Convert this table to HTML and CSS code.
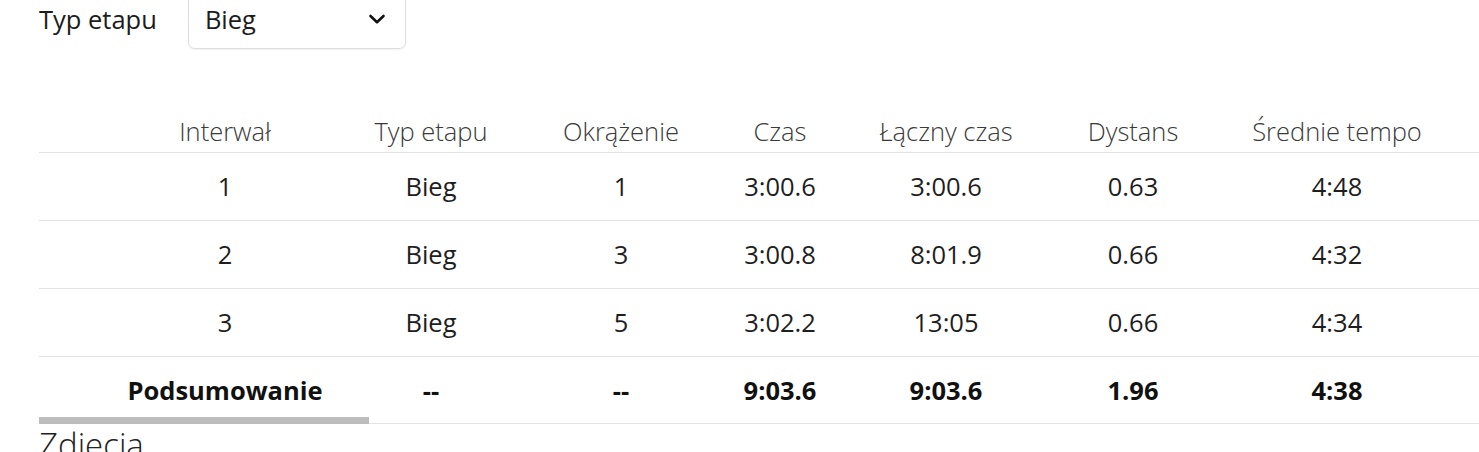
FILE: index.html
```html
<!DOCTYPE html>
<html lang="pl">
<head>
<meta charset="utf-8">
<title>Interwały</title>
<link rel="stylesheet" href="styles.css">
</head>
<body>
<main class="page">
  <div class="filter">
    <span class="filter-label">Typ etapu</span>
    <div class="select">
      <span class="select-value">Bieg</span>
      <svg class="chevron" width="18" height="12" viewBox="0 0 18 12" aria-hidden="true"><path d="M2.5 3 L9 9.2 L15.5 3" fill="none" stroke="#111" stroke-width="2.6" stroke-linecap="round" stroke-linejoin="round"/></svg>
    </div>
  </div>

  <div class="table-scroll">
    <table class="laps">
      <colgroup>
        <col class="c1"><col class="c2"><col class="c3"><col class="c4"><col class="c5"><col class="c6"><col class="c7"><col class="c8">
      </colgroup>
      <thead>
        <tr>
          <th>Interwał</th><th>Typ etapu</th><th>Okrążenie</th><th>Czas</th><th>Łączny czas</th><th>Dystans</th><th>Średnie tempo</th><th></th>
        </tr>
      </thead>
      <tbody>
        <tr><td>1</td><td>Bieg</td><td>1</td><td>3:00.6</td><td>3:00.6</td><td>0.63</td><td>4:48</td><td></td></tr>
        <tr><td>2</td><td>Bieg</td><td>3</td><td>3:00.8</td><td>8:01.9</td><td>0.66</td><td>4:32</td><td></td></tr>
        <tr><td>3</td><td>Bieg</td><td>5</td><td>3:02.2</td><td>13:05</td><td>0.66</td><td>4:34</td><td></td></tr>
        <tr class="summary"><td>Podsumowanie</td><td>--</td><td>--</td><td>9:03.6</td><td>9:03.6</td><td>1.96</td><td>4:38</td><td></td></tr>
      </tbody>
    </table>
    <div class="scroll-thumb"></div>
  </div>

  <h2 class="section-title">Zdjęcia</h2>
</main>
</body>
</html>
```

FILE: styles.css
```css
html, body {
  margin: 0;
  padding: 0;
  background: #fff;
}

body {
  font-family: "Open Sans", "Noto Sans", sans-serif;
  color: #222;
  overflow: hidden;
}

.page {
  padding-left: 39px;
}

.filter {
  display: flex;
  align-items: center;
  gap: 31px;
  margin-top: -11px;
  height: 60px;
}

.filter-label {
  font-size: 25.5px;
  color: #1c1c1c;
}

.select {
  box-sizing: border-box;
  width: 218px;
  height: 60px;
  border: 1px solid #dedede;
  border-radius: 7px;
  box-shadow: 0 1px 2px rgba(0,0,0,0.06);
  display: flex;
  align-items: center;
  justify-content: space-between;
  padding: 0 19px 0 16px;
  font-size: 25.5px;
  color: #1c1c1c;
}

.chevron {
  display: block;
}

.table-scroll {
  position: relative;
  margin-top: 48px;
  overflow: hidden;
}

.laps {
  width: 1440px;
  table-layout: fixed;
  border-collapse: collapse;
  font-size: 25.5px;
}

.c1 { width: 289px; }
.c2 { width: 206px; }
.c3 { width: 174px; }
.c4 { width: 144px; }
.c5 { width: 188px; }
.c6 { width: 186px; }
.c7 { width: 222px; }
.c8 { width: auto; }

.laps th,
.laps td {
  text-align: center;
  white-space: nowrap;
  border-bottom: 1px solid #e3e3e3;
  line-height: 34px;
}

.laps th:first-child,
.laps td:first-child {
  padding-left: 83px;
}

.laps th {
  font-weight: 300;
  color: #3a3a3a;
  padding: 17px 0 4px;
}

.laps td {
  color: #1e1e1e;
  padding: 16px 0 17px;
  height: 34px;
}

.laps .summary td {
  font-weight: 700;
  color: #111;
  padding-bottom: 16px;
}

.scroll-thumb {
  position: absolute;
  left: 0;
  bottom: 0;
  width: 330px;
  height: 7px;
  background: #bdbdbd;
}

.section-title {
  margin: 1px 0 0;
  font-size: 33px;
  font-weight: 300;
  line-height: 1.2;
  color: #222;
}
```
